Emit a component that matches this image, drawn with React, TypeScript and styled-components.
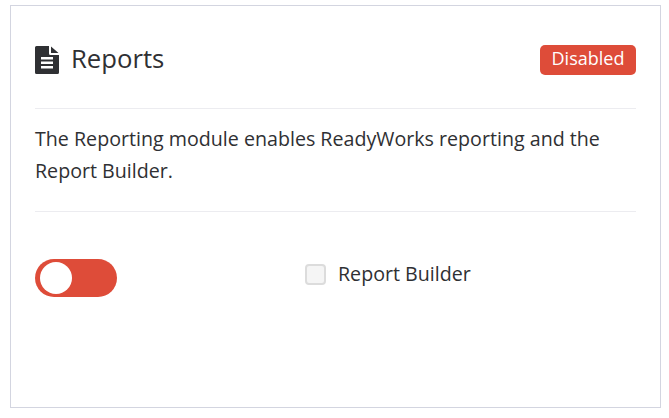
import React from "react";
import styled, { createGlobalStyle } from "styled-components";

const Global = createGlobalStyle`
  html, body { margin: 0; padding: 0; background: #fff; }
  body { font-family: "Open Sans", "Noto Sans", sans-serif; color: #2f3033; }
`;

const Page = styled.div`
  padding: 5px 8px 10px 10px;
`;

const Card = styled.section`
  box-sizing: border-box;
  width: 651px;
  height: 403px;
  border: 1px solid #d3d5e0;
  padding: 0 24px;
`;

const Header = styled.header`
  display: flex;
  align-items: center;
  justify-content: space-between;
  height: 103px;
  padding-top: 5px;
  box-sizing: border-box;
  border-bottom: 1px solid #ececf0;
`;

const Title = styled.h2`
  display: flex;
  align-items: center;
  gap: 12px;
  margin: 0;
  font-size: 25.7px;
  font-weight: 400;
  line-height: 32px;
  color: #2f3033;
`;

const TitleText = styled.span`
  padding-bottom: 2px;
`;

const DocIcon = styled.svg`
  width: 24px;
  height: 28px;
  display: block;
  flex: none;
`;

const Badge = styled.span`
  display: block;
  width: 96px;
  height: 30px;
  border-radius: 5px;
  background: #de4c39;
  color: #fff;
  font-size: 18px;
  line-height: 26px;
  text-align: center;
`;

const Description = styled.p`
  margin: 0;
  padding: 14px 0 24px;
  font-size: 19.65px;
  line-height: 32px;
  border-bottom: 1px solid #ececf0;
`;

const Controls = styled.div`
  display: grid;
  grid-template-columns: 270px 1fr;
  padding-top: 47px;
`;

const Toggle = styled.div`
  box-sizing: border-box;
  width: 82px;
  height: 38px;
  border-radius: 19px;
  background: #de4c39;
  padding: 3px 5px;
`;

const Knob = styled.div`
  width: 32px;
  height: 32px;
  border-radius: 50%;
  background: #fff;
`;

const CheckRow = styled.label`
  display: flex;
  align-items: center;
  gap: 12px;
  height: 30px;
  font-size: 19.65px;
`;

const CheckBox = styled.span`
  box-sizing: border-box;
  width: 21px;
  height: 21px;
  border: 2px solid #dcdcdc;
  border-radius: 4px;
  background: #f5f5f5;
`;

const Label = styled.span`
  padding-bottom: 2px;
`;

export default function App() {
  return (
    <Page>
      <Global />
      <Card>
        <Header>
          <Title>
            <DocIcon viewBox="0 0 24 28" aria-hidden="true">
              <path
                fill="#2f3033"
                fillRule="evenodd"
                d="M0 1.5A1.5 1.5 0 0 1 1.5 0H14v7.5A1.5 1.5 0 0 0 15.5 9H24v17.5a1.5 1.5 0 0 1-1.5 1.5h-21A1.5 1.5 0 0 1 0 26.5ZM16 0.5 23.5 7H16ZM6 11v2.4h12V11ZM6 15.5v2.4h12v-2.4ZM6 20v2.4h12V20Z"
              />
            </DocIcon>
            <TitleText>Reports</TitleText>
          </Title>
          <Badge>Disabled</Badge>
        </Header>
        <Description>
          The Reporting module enables ReadyWorks reporting and the Report Builder.
        </Description>
        <Controls>
          <Toggle>
            <Knob />
          </Toggle>
          <CheckRow>
            <CheckBox />
            <Label>Report Builder</Label>
          </CheckRow>
        </Controls>
      </Card>
    </Page>
  );
}
